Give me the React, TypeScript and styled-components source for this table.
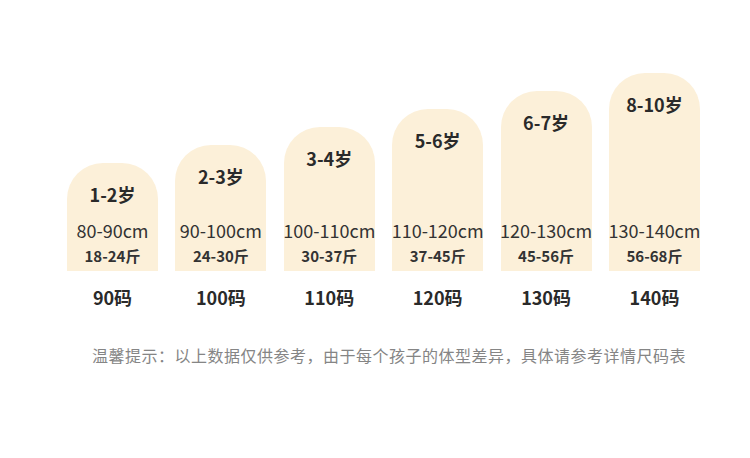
import React from 'react';
import styled, { createGlobalStyle } from 'styled-components';

const sizes = [
  { age: '1-2岁', height: '80-90cm', weight: '18-24斤', size: '90码' },
  { age: '2-3岁', height: '90-100cm', weight: '24-30斤', size: '100码' },
  { age: '3-4岁', height: '100-110cm', weight: '30-37斤', size: '110码' },
  { age: '5-6岁', height: '110-120cm', weight: '37-45斤', size: '120码' },
  { age: '6-7岁', height: '120-130cm', weight: '45-56斤', size: '130码' },
  { age: '8-10岁', height: '130-140cm', weight: '56-68斤', size: '140码' },
];

export default function App() {
  return (
    <>
      <GlobalStyle />
      <Page>
        <Chart>
          {sizes.map((item, i) => (
            <Column key={item.size}>
              <Card $height={108 + i * 18}>
                <Age>{item.age}</Age>
                <Stats>
                  <Height>{item.height}</Height>
                  <Weight>{item.weight}</Weight>
                </Stats>
              </Card>
              <SizeLabel>{item.size}</SizeLabel>
            </Column>
          ))}
        </Chart>
        <Note>温馨提示：以上数据仅供参考，由于每个孩子的体型差异，具体请参考详情尺码表</Note>
      </Page>
    </>
  );
}

const GlobalStyle = createGlobalStyle`
  body {
    margin: 0;
    background: #ffffff;
    font-family: "Noto Sans CJK SC", "Noto Sans", sans-serif;
  }
`;

const Page = styled.div`
  width: 750px;
  height: 458px;
  padding: 73px 0 0 67px;
  box-sizing: border-box;
`;

const Chart = styled.div`
  display: flex;
  align-items: flex-end;
  gap: 17.4px;
  width: 633px;
`;

const Column = styled.div`
  display: flex;
  flex-direction: column;
  width: 91px;
`;

const Card = styled.div<{ $height: number }>`
  height: ${(p) => p.$height}px;
  display: flex;
  flex-direction: column;
  justify-content: space-between;
  align-items: center;
  background: #fcf0d9;
  border-radius: 36px 36px 0 0;
  color: #2a2a2a;
`;

const Age = styled.div`
  padding-top: 19px;
  font-size: 18px;
  line-height: 24px;
  font-weight: 700;
`;

const Stats = styled.div`
  display: flex;
  flex-direction: column;
  align-items: center;
  padding-bottom: 3px;
`;

const Height = styled.div`
  font-size: 18px;
  line-height: 25px;
  color: #333333;
  white-space: nowrap;
`;

const Weight = styled.div`
  font-size: 15px;
  line-height: 25px;
  font-weight: 700;
  color: #333333;
`;

const SizeLabel = styled.div`
  margin-top: 14px;
  text-align: center;
  font-size: 18px;
  line-height: 24px;
  font-weight: 700;
  color: #2a2a2a;
`;

const Note = styled.div`
  margin-top: 34px;
  padding-left: 25px;
  font-size: 16px;
  line-height: 24px;
  letter-spacing: 0.5px;
  color: #858585;
`;
